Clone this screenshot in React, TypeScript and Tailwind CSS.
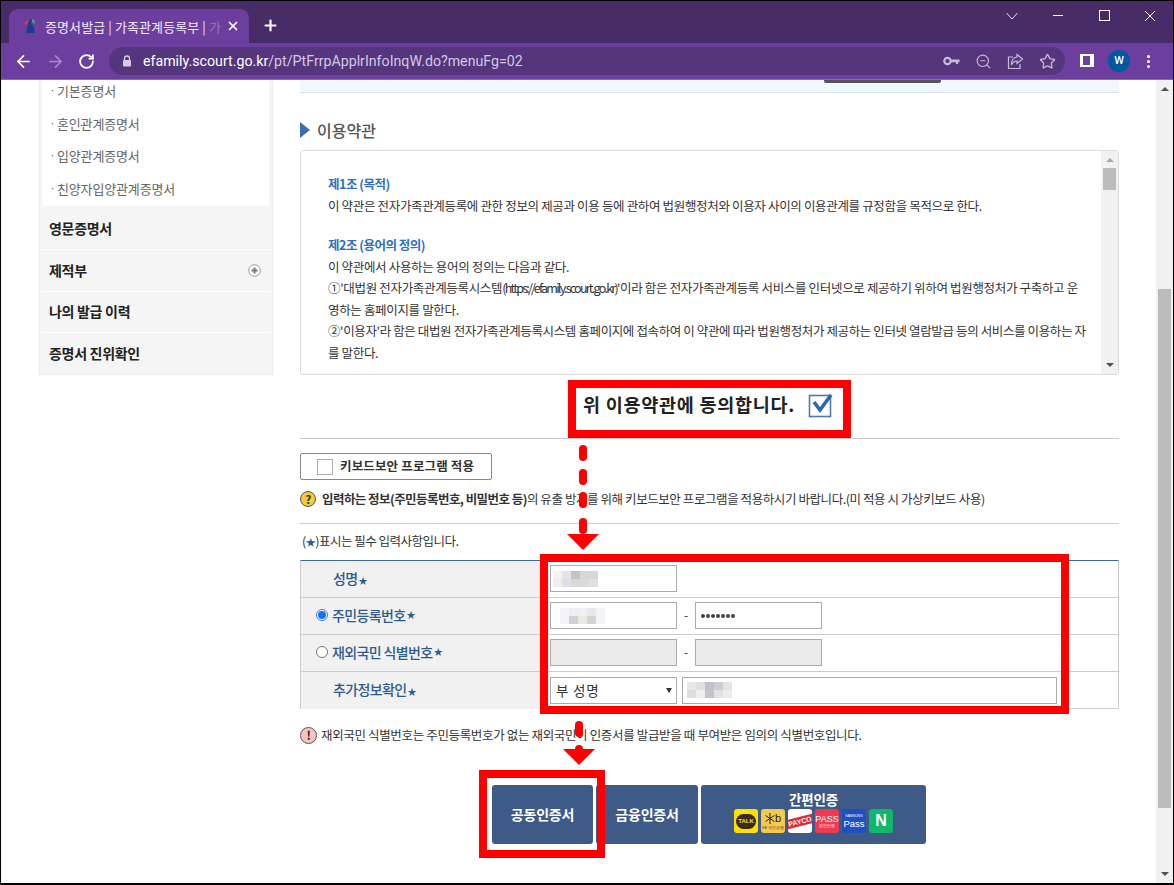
import { ArrowLeft, ArrowRight, RotateCw, Plus, X, Star, ZoomOut } from "lucide-react"

const sideSub = ["기본증명서", "혼인관계증명서", "입양관계증명서", "친양자입양관계증명서"]

const blurName = ["bg-[#f3f3f3]", "bg-[#e2e4ea]", "bg-[#c4c2c4]", "bg-[#d9d5d2]", "bg-[#d5d6dc]", "bg-[#eeeeea]", "bg-[#dde0e6]", "bg-[#d9d8d8]", "bg-[#dbd9d6]", "bg-[#dfe0e4]"]
const blurId = ["bg-[#f2f4f6]", "bg-[#eceef0]", "bg-[#f0f0f4]", "bg-[#e8e8ec]", "bg-[#f4f4f8]", "bg-[#f3f4f6]", "bg-[#d2d0d4]", "bg-[#ece8e4]", "bg-[#d3d4d8]", "bg-[#f4f4f8]"]
const blurExtra = ["bg-[#e8e8ea]", "bg-[#dfe0dc]", "bg-[#bfc2c6]", "bg-[#d0ccd4]", "bg-[#e0e6e8]", "bg-[#dedede]", "bg-[#eeeeec]", "bg-[#c3c5ca]", "bg-[#e2e2e4]", "bg-[#eaecee]"]

function Mosaic({ cells }: { cells: string[] }) {
  return (
    <div className="grid grid-cols-[repeat(5,9px)] grid-rows-[repeat(2,8px)]">
      {cells.map((c, i) => (
        <div key={i} className={c} />
      ))}
    </div>
  )
}

function TitleBar() {
  return (
    <div className="h-[42px] shrink-0 bg-[#472c68] flex items-end pl-[8px] relative">
      <div className="w-[240px] h-[34px] bg-[#6c3f9e] rounded-t-[9px] flex items-center pl-[14px] pr-[9px]">
        <svg width="13" height="16" viewBox="0 0 13 16" className="shrink-0 mb-[1px]">
          <path d="M3 15 L5 5 Q6 1 9 1 L8 5 L11 9 L12 15 Z" fill="#1c3f8c" />
          <path d="M1 6 Q3 2 6 2 L4 7 Z" fill="#d13c5a" />
          <path d="M9 1 Q12 2 12 6 L9 4 Z" fill="#3fae7b" />
        </svg>
        <span className="ml-[9px] text-[13px] leading-none text-[#f1eaf8] whitespace-nowrap tracking-[0.1px]">
          증명서발급 | 가족관계등록부 | <span className="opacity-30">가</span>
        </span>
        <X className="ml-auto text-white shrink-0" size={14} strokeWidth={3} />
      </div>
      <Plus className="ml-[13px] mb-[9px] text-white" size={17} strokeWidth={3} />
      <svg width="14" height="10" viewBox="0 0 14 10" className="absolute left-[1004px] top-[10px]">
        <path d="M1.5 2 L7 8 L12.5 2" fill="none" stroke="#e6e0ee" strokeWidth="1" />
      </svg>
      <div className="absolute left-[1052px] top-[14px] w-[10px] h-[1px] bg-white" />
      <div className="absolute left-[1098px] top-[9px] w-[11px] h-[11px] border border-white" />
      <svg width="12" height="12" viewBox="0 0 12 12" className="absolute left-[1143px] top-[9px]">
        <path d="M1 1 L11 11 M11 1 L1 11" stroke="#fff" strokeWidth="1" />
      </svg>
    </div>
  )
}

function Toolbar() {
  return (
    <div className="h-[37px] shrink-0 bg-[#6c3f9e] border-b border-[#8b6bb0] flex items-start pt-[4px] relative">
      <div className="w-[108px] h-[28px] flex items-center pl-[13px]">
        <ArrowLeft className="text-white" size={19} strokeWidth={2.2} />
        <ArrowRight className="ml-[13px] text-[#a48cc4]" size={19} strokeWidth={2.2} />
        <RotateCw className="ml-[13px] text-white" size={17} strokeWidth={2.6} />
      </div>
      <div className="w-[956px] h-[28px] rounded-full bg-[#55357c] flex items-center pl-[13px] pr-[9px]">
        <svg width="10" height="12" viewBox="0 0 10 12" className="shrink-0">
          <path d="M2.5 5 V3.5 a2.5 2.5 0 0 1 5 0 V5" fill="none" stroke="#d6cbe2" strokeWidth="1.3" />
          <rect x="1" y="5" width="8" height="6.5" rx="1" fill="#d6cbe2" />
        </svg>
        <span className="ml-[11px] font-['Roboto',sans-serif] text-[14.2px] leading-none text-[#d4c8e2] whitespace-nowrap">
          <span className="text-white">efamily.scourt.go.kr</span>/pt/PtFrrpApplrInfoInqW.do?menuFg=02
        </span>
        <div className="ml-auto flex items-center gap-[15px] text-[#c9bcd8]">
          <svg width="17" height="10" viewBox="0 0 17 10">
            <circle cx="4.5" cy="5" r="3.2" fill="none" stroke="#c9bcd8" strokeWidth="2.2" />
            <path d="M7.5 3.6 H16.5 V6.2 H15 V8 H13 V6.2 H7.5 Z" fill="#c9bcd8" />
          </svg>
          <ZoomOut size={17} strokeWidth={1.6} />
          <svg width="17" height="17" viewBox="0 0 17 17" fill="none" stroke="#c9bcd8" strokeWidth="1.2">
            <path d="M6 4 H1.5 V15.5 H13 V11" />
            <path d="M10 1.5 L15.5 6 L10 10.5 V8 Q6 8 4.5 12 Q4.5 4.5 10 4 Z" />
          </svg>
          <Star size={17} strokeWidth={1.8} />
        </div>
      </div>
      <div className="ml-[15px] mt-[7px] w-[14px] h-[13px] bg-white flex">
        <div className="ml-[3px] w-[7px] h-[9px] mt-[2px] bg-[#6c3f9e]" />
      </div>
      <div className="ml-[14px] mt-[3px] w-[22px] h-[22px] rounded-full bg-[#0059a0] flex items-center justify-center text-white text-[11px] font-['Roboto',sans-serif] font-medium">
        W
      </div>
      <div className="ml-[17px] mt-[8px] flex flex-col gap-[2px]">
        <div className="w-[3px] h-[3px] rounded-full bg-white" />
        <div className="w-[3px] h-[3px] rounded-full bg-white" />
        <div className="w-[3px] h-[3px] rounded-full bg-white" />
      </div>
    </div>
  )
}

function Sidebar() {
  return (
    <aside className="w-[234px] shrink-0 self-start bg-[#f5f5f5] border-b border-x border-[#ececec] px-[2px]">
      <div className="w-[227px] bg-white h-[126px] rounded-b-[2px] overflow-hidden">
        <div className="-mt-[6px]">
          {sideSub.map((s) => (
            <div key={s} className="h-[32.9px] flex items-center pl-[8px] text-[13px] text-[#666] tracking-[-0.15px] whitespace-nowrap">
              <span className="text-[9px] mr-[2px] w-[1px] text-[#444]">·</span>
              <span className="ml-[4px]">{s}</span>
            </div>
          ))}
        </div>
      </div>
      <div className="text-[14px] font-semibold text-[#222] tracking-[-0.3px]">
        <div className="h-[44px] flex items-center pl-[7px] pt-[1px] border-b border-white">영문증명서</div>
        <div className="h-[42px] flex items-center pl-[7px] pb-[1px] border-b border-white">
          제적부
          <svg width="13" height="13" viewBox="0 0 13 13" className="ml-auto mr-[9px]">
            <circle cx="6.5" cy="6.5" r="5.8" fill="#fff" stroke="#999" />
            <path d="M3.5 6.5 H9.5 M6.5 3.5 V9.5" stroke="#777" strokeWidth="2" />
          </svg>
        </div>
        <div className="h-[41px] flex items-center pl-[7px] pb-[1px] border-b border-white">나의 발급 이력</div>
        <div className="h-[41px] flex items-center pl-[7px]">증명서 진위확인</div>
      </div>
    </aside>
  )
}

function Terms() {
  return (
    <div className="h-[225px] rounded-[3px] border border-[#dcdcdc] flex overflow-hidden">
      <div className="flex-1 pl-[27px] pt-[22px] text-[12.5px] leading-[21.5px] text-[#333] tracking-[-0.34px] whitespace-nowrap">
        <p className="text-[#2f6fc4] font-semibold tracking-[-0.5px]">제1조 (목적)</p>
        <p>이 약관은 전자가족관계등록에 관한 정보의 제공과 이용 등에 관하여 법원행정처와 이용자 사이의 이용관계를 규정함을 목적으로 한다.</p>
        <p className="mt-[18px] text-[#2f6fc4] font-semibold tracking-[-0.5px]">제2조 (용어의 정의)</p>
        <p>이 약관에서 사용하는 용어의 정의는 다음과 같다.</p>
        <p className="tracking-[-0.33px]">①'대법원 전자가족관계등록시스템<span className="tracking-[-1.75px]">(https://efamily.scourt.go.kr)</span>'이라 함은 전자가족관계등록 서비스를 인터넷으로 제공하기 위하여 법원행정처가 구축하고 운</p>
        <p>영하는 홈페이지를 말한다.</p>
        <p className="tracking-[-0.38px]">②'이용자'라 함은 대법원 전자가족관계등록시스템 홈페이지에 접속하여 이 약관에 따라 법원행정처가 제공하는 인터넷 열람발급 등의 서비스를 이용하는 자</p>
        <p>를 말한다.</p>
      </div>
      <div className="w-[17px] bg-[#f1f1f1] flex flex-col items-center pt-[7px]">
        <div className="w-0 h-0 border-x-[4px] border-x-transparent border-b-[4px] border-b-[#a8a8a8]" />
        <div className="mt-[6px] w-[13px] h-[22px] bg-[#bcbcbc]" />
        <div className="mt-auto mb-[7px] w-0 h-0 border-x-[4px] border-x-transparent border-t-[4px] border-t-[#505050]" />
      </div>
    </div>
  )
}

function Star2() {
  return <span className="ml-[1px] text-[9px] text-[#2c5a92]">★</span>
}

function Field({ children, className }: { children?: React.ReactNode; className?: string }) {
  return <div className={`h-[27px] border border-[#aaa] flex items-center ${className}`}>{children}</div>
}

function Row({ label, children, last }: { label: React.ReactNode; children: React.ReactNode; last?: boolean }) {
  return (
    <div className={`h-[37px] flex ${last ? "" : "border-b border-[#ccc]"}`}>
      <div className="w-[240px] shrink-0 bg-[#f1f1f1] flex items-center pb-[2px] text-[14px] font-medium text-[#2c5a92] tracking-[-0.62px] whitespace-nowrap">
        {label}
      </div>
      <div className="flex items-center pl-[9px] pb-[1px] text-[12px] text-[#333]">{children}</div>
    </div>
  )
}

function Radio({ on }: { on?: boolean }) {
  return (
    <span className={`ml-[15px] mr-[4px] w-[12px] h-[12px] rounded-full border flex items-center justify-center bg-white ${on ? "border-[#2f7de1]" : "border-[#777]"}`}>
      {on ? <span className="w-[8px] h-[8px] rounded-full bg-[#1a73e8]" /> : null}
    </span>
  )
}

function IdentityTable() {
  return (
    <div className="h-[149px] border-t border-t-[#3b6aa5] border-x border-x-[#ccc] border-b border-b-[#ccc]">
      <Row label={<span className="pl-[32px]">성명<Star2 /></span>}>
        <Field className="w-[127px] pl-[2px]"><Mosaic cells={blurName} /></Field>
      </Row>
      <Row label={<><Radio on />주민등록번호<Star2 /></>}>
        <Field className="w-[127px] pl-[9px]"><Mosaic cells={blurId} /></Field>
        <span className="w-[18px] text-center pb-[2px]">-</span>
        <Field className="w-[127px] pl-[5px] gap-[1px]">
          {[0, 1, 2, 3, 4, 5, 6].map((d) => (
            <span key={d} className="w-[4px] h-[4px] rounded-full bg-[#444]" />
          ))}
        </Field>
      </Row>
      <Row label={<><Radio />재외국민 식별번호<Star2 /></>}>
        <Field className="w-[127px] bg-[#ebebeb]" />
        <span className="w-[18px] text-center pb-[2px]">-</span>
        <Field className="w-[127px] bg-[#ebebeb]" />
      </Row>
      <Row last label={<span className="pl-[32px]">추가정보확인<Star2 /></span>}>
        <Field className="w-[127px] pl-[5px] pr-[4px] text-[13.5px] tracking-[0.8px] whitespace-nowrap">
          부 성명
          <span className="ml-auto w-0 h-0 border-x-[3px] border-x-transparent border-t-[5px] border-t-[#333]" />
        </Field>
        <Field className="ml-[5px] w-[375px] pl-[4px]"><Mosaic cells={blurExtra} /></Field>
      </Row>
    </div>
  )
}

function Tile({ className, children }: { className: string; children?: React.ReactNode }) {
  return <div className={`w-[24px] h-[24px] rounded-[3px] flex flex-col items-center justify-center overflow-hidden relative ${className}`}>{children}</div>
}

function AuthButtons() {
  return (
    <div className="mt-[41px] pl-[192px] flex gap-[3px] text-white font-semibold text-[14px] tracking-[-0.2px]">
      <button className="w-[101px] h-[59px] rounded-[3px] bg-[#3e5a87]">공동인증서</button>
      <button className="w-[102px] h-[59px] rounded-[3px] bg-[#3e5a87]">금융인증서</button>
      <button className="w-[225px] h-[59px] rounded-[3px] bg-[#3e5a87] flex flex-col items-center pt-[5px]">
        <span className="leading-[18px] text-[13.5px]">간편인증</span>
        <span className="mt-[1px] flex gap-[3px] font-['Liberation_Sans',sans-serif]">
          <Tile className="bg-[#fae100]">
            <span className="w-[20px] h-[15px] rounded-full bg-[#3c2a1e] text-[#fae100] text-[6px] leading-[15px] text-center font-bold tracking-normal">TALK</span>
          </Tile>
          <Tile className="bg-[#f5c94c]">
            <span className="flex items-center h-[14px]">
              <svg width="10" height="11" viewBox="0 0 10 11" stroke="#222" strokeWidth="1">
                <path d="M5 0 V11 M0.5 2.5 L9.5 8.5 M9.5 2.5 L0.5 8.5" />
              </svg>
              <span className="text-[#222] text-[11px] leading-none font-normal">b</span>
            </span>
            <span className="text-[#444] text-[3.5px] leading-[5px] font-normal tracking-normal">KB 국민은행</span>
          </Tile>
          <Tile className="bg-white">
            <span className="w-[30px] bg-[#e0282e] text-white text-[7px] leading-[9px] text-center font-bold tracking-normal -rotate-[14deg]">PAYCO</span>
          </Tile>
          <Tile className="bg-[#ee3a55]">
            <span className="text-[9px] leading-[10px] font-normal tracking-normal">PASS</span>
            <span className="text-[3.5px] leading-[5px] font-normal tracking-normal">본인인증</span>
          </Tile>
          <Tile className="bg-[#1f4fc0]">
            <span className="text-[3.5px] leading-[5px] font-normal tracking-normal">SAMSUNG</span>
            <span className="text-[9.5px] leading-[10px] font-normal tracking-normal">Pass</span>
          </Tile>
          <Tile className="bg-[#0fb868]">
            <span className="text-[16px] leading-none font-bold">N</span>
          </Tile>
        </span>
      </button>
    </div>
  )
}

function MainColumn() {
  return (
    <main className="w-[819px] shrink-0 ml-[27px]">
      <div className="h-[13px] bg-[#f0f7fd] border-b border-[#d3e0ea] flex justify-end pr-[178px]">
        <div className="w-[117px] h-[3px] bg-[#555] rounded-b-[2px]" />
      </div>
      <div className="h-[57px] pt-[19px] flex items-start">
        <div className="mt-[10px] w-0 h-0 border-y-[8px] border-y-transparent border-l-[10px] border-l-[#3d6cb5]" />
        <h2 className="ml-[7px] text-[16px] leading-[36px] font-medium text-[#555]">이용약관</h2>
      </div>
      <Terms />
      <div className="h-[64px] border-b border-[#ccc] flex items-center pl-[283px] pb-[3px]">
        <span className="text-[18.5px] font-bold text-[#222] tracking-[0.75px] whitespace-nowrap">위 이용약관에 동의합니다.</span>
        <svg width="26" height="26" viewBox="0 0 26 26" className="ml-[13px]">
          <rect x="1.5" y="3.5" width="21" height="21" fill="#fff" stroke="#4f7ab8" strokeWidth="1.6" />
          <path d="M6 10 L12 18 L23 3" fill="none" stroke="#2e66ad" strokeWidth="3.6" />
        </svg>
      </div>
      <div className="h-[85px] border-b border-[#ccc] pt-[14px]">
        <div className="w-[192px] h-[27px] border border-[#888] rounded-[2px] flex items-center pl-[16px] text-[12.5px] font-semibold text-[#333] tracking-[0.15px] whitespace-nowrap">
          <span className="w-[16px] h-[16px] border border-[#aaa] mr-[7px]" />
          키보드보안 프로그램 적용
        </div>
        <div className="mt-[10px] flex items-center text-[12.5px] text-[#333] tracking-[-0.42px] whitespace-nowrap">
          <span className="w-[16px] h-[16px] rounded-full bg-[#f8cb2e] border border-[#555] text-[11px] font-bold text-[#222] flex items-center justify-center mr-[6px]">?</span>
          <b className="font-semibold tracking-[-0.55px]">입력하는 정보(주민등록번호, 비밀번호 등)</b>
          의 유출 방지를 위해 키보드보안 프로그램을 적용하시기 바랍니다.(미 적용 시 가상키보드 사용)
        </div>
      </div>
      <div className="h-[36px] pl-[2px] pt-[7px] text-[12.5px] leading-[20px] text-[#333] tracking-[-0.5px] whitespace-nowrap">
        (<span className="text-[#2c5a92] text-[10px]">★</span>)표시는 필수 입력사항입니다.
      </div>
      <IdentityTable />
      <div className="mt-[17px] flex items-center text-[12.5px] leading-[18px] text-[#333] tracking-[-0.35px] whitespace-nowrap">
        <span className="w-[17px] h-[17px] rounded-full bg-[#f6c4bb] border border-[#555] text-[12px] font-bold text-[#222] flex items-center justify-center mr-[4px]">!</span>
        재외국민 식별번호는 주민등록번호가 없는 재외국민이 인증서를 발급받을 때 부여받은 임의의 식별번호입니다.
      </div>
      <AuthButtons />
    </main>
  )
}

function PageScrollbar() {
  return (
    <div className="ml-auto w-[17px] bg-[#f1f1f1] flex flex-col items-center pt-[7px]">
      <div className="w-0 h-0 border-x-[4px] border-x-transparent border-b-[4px] border-b-[#505050]" />
      <div className="mt-[198px] w-[13px] h-[519px] bg-[#bcbcbc]" />
      <div className="mt-auto mb-[7px] w-0 h-0 border-x-[4px] border-x-transparent border-t-[4px] border-t-[#505050]" />
    </div>
  )
}

// 빨간 표시는 캡처 위에 덧그린 주석이라 절대 위치로 둔다
function Annotations() {
  const dash = "absolute w-[8px] rounded-full bg-[#ff0000]"
  return (
    <>
      <div className="absolute left-[567px] top-[379px] w-[283px] h-[58px] border-[8px] border-[#ff0000]" />
      <div className="absolute left-[539px] top-[553px] w-[529px] h-[160px] border-[8px] border-[#ff0000]" />
      <div className="absolute left-[478px] top-[769px] w-[126px] h-[88px] border-[8px] border-[#ff0000]" />
      <div className={`${dash} left-[578px] top-[444px] h-[16px]`} />
      <div className={`${dash} left-[578px] top-[468px] h-[16px]`} />
      <div className={`${dash} left-[578px] top-[491px] h-[16px]`} />
      <div className={`${dash} left-[578px] top-[517px] h-[16px]`} />
      <div className="absolute left-[566px] top-[533px] w-0 h-0 border-x-[16px] border-x-transparent border-t-[16px] border-t-[#ff0000]" />
      <div className={`${dash} left-[574px] top-[720px] h-[16px]`} />
      <div className={`${dash} left-[574px] top-[744px] h-[8px]`} />
      <div className="absolute left-[562px] top-[748px] w-0 h-0 border-x-[16px] border-x-transparent border-t-[16px] border-t-[#ff0000]" />
    </>
  )
}

export default function App() {
  return (
    <div className="relative w-full h-[885px] overflow-hidden flex flex-col bg-white border-t border-x border-b-2 border-black font-['Noto_Sans_CJK_KR',sans-serif]">
      <TitleBar />
      <Toolbar />
      <div className="flex-1 min-h-0 flex pl-[38px] overflow-hidden">
        <Sidebar />
        <MainColumn />
        <PageScrollbar />
      </div>
      <Annotations />
    </div>
  )
}
